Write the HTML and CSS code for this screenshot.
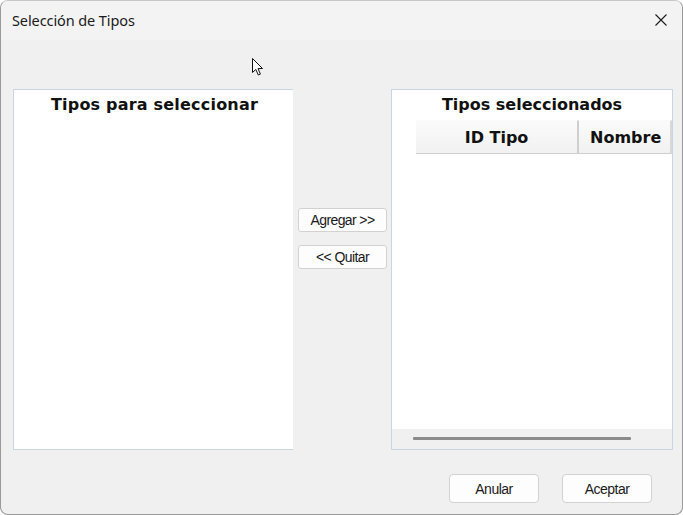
FILE: index.html
```html
<!DOCTYPE html>
<html lang="es">
<head>
<meta charset="utf-8">
<title>Selección de Tipos</title>
<link rel="stylesheet" href="styles.css">
</head>
<body>
<div class="window">
  <div class="titlebar">
    <span class="title">Selección de Tipos</span>
    <span class="close">
      <svg width="12" height="12" viewBox="0 0 12 12"><path d="M0.5 0.5 L11.5 11.5 M11.5 0.5 L0.5 11.5" stroke="#1b1b1b" stroke-width="1.1" fill="none"/></svg>
    </span>
  </div>
  <div class="content">
    <div class="panels">
      <div class="panel left">
        <div class="panel-title">Tipos para seleccionar</div>
      </div>
      <div class="middle">
        <button class="btn small">Agregar &gt;&gt;</button>
        <button class="btn small">&lt;&lt; Quitar</button>
      </div>
      <div class="panel right">
        <div class="panel-title">Tipos seleccionados</div>
        <div class="grid-header">
          <div class="col id">ID Tipo</div>
          <div class="col nombre">Nombre</div>
        </div>
        <div class="grid-body"></div>
        <div class="hscroll"><div class="thumb"></div></div>
      </div>
    </div>
    <div class="footer">
      <button class="btn big">Anular</button>
      <button class="btn big">Aceptar</button>
    </div>
  </div>
  <svg class="cursor" width="13" height="20" viewBox="0 0 13 20"><path d="M1.5 1.5 L1.5 15.5 L4.8 12.4 L7.3 18 L9.4 17.1 L7 11.6 L11.5 11.5 Z" fill="#fff" stroke="#111" stroke-width="1" stroke-linejoin="round"/></svg>
</div>
</body>
</html>
```
FILE: styles.css
```css
* { box-sizing: border-box; }
html, body { margin: 0; padding: 0; background: #ffffff; }
body { width: 683px; height: 515px; overflow: hidden; }

.window {
  position: relative;
  width: 683px;
  height: 515px;
  border: 1px solid #9a9a9a;
  border-top-color: #c8c8c8;
  border-radius: 8px;
  background: #f0f0f0;
  overflow: hidden;
  display: flex;
  flex-direction: column;
}

.titlebar {
  height: 39px;
  background: #f3f3f3;
  display: flex;
  align-items: center;
  justify-content: space-between;
  padding: 0 15px 0 11px;
  flex: none;
}
.title {
  font-family: "Noto Sans", "Open Sans", sans-serif;
  font-size: 14.5px;
  color: #1a1a1a;
  letter-spacing: -0.1px;
  margin-top: -1px;
}
.close { display: flex; margin-top: -1px; }

.content {
  flex: 1;
  display: flex;
  flex-direction: column;
  padding: 49px 9px 0 12px;
}

.panels {
  display: flex;
  height: 361px;
}

.panel {
  background: #ffffff;
  border: 1px solid #c9d5e3;
  display: flex;
  flex-direction: column;
}
.panel.left {
  width: 280px;
  border-right: none;
}
.panel.right {
  width: 282px;
}

.panel-title {
  font-family: "DejaVu Sans", Verdana, sans-serif;
  font-weight: bold;
  font-size: 16px;
  color: #111;
  text-align: center;
  line-height: 18px;
  padding-top: 6px;
  height: 30px;
}
.panel.left .panel-title { padding-left: 2px; letter-spacing: 0.2px; }

.middle {
  width: 98px;
  display: flex;
  flex-direction: column;
  align-items: center;
  padding-top: 119px;
  gap: 13px;
  padding-left: 1px;
}

.btn {
  font-family: "Liberation Sans", Arial, sans-serif;
  color: #1a1a1a;
  background: #fdfdfd;
  border: 1px solid #d2d2d2;
  border-radius: 3px;
  padding: 0;
  margin: 0;
}
.btn.small {
  width: 89px;
  height: 24px;
  font-size: 14px;
  letter-spacing: -0.6px;
}

.grid-header {
  display: flex;
  margin-left: 24px;
  height: 34px;
  flex: none;
}
.col {
  font-family: "DejaVu Sans", Verdana, sans-serif;
  font-weight: bold;
  font-size: 16px;
  color: #111;
  display: flex;
  align-items: center;
  background: linear-gradient(#fbfbfb, #f1f1f1);
  border-bottom: 1px solid #cfcfcf;
  border-top: 1px solid #fafafa;
  padding-top: 1px;
}
.col.id {
  width: 163px;
  justify-content: center;
  border-right: 2px solid #cfcfcf;
}
.col.nombre {
  flex: 1;
  padding-left: 11px;
  border-right: 2px solid #d8d8d8;
  white-space: nowrap;
  overflow: hidden;
}

.grid-body {
  flex: 1;
  background: #ffffff;
}

.hscroll {
  height: 20px;
  flex: none;
  background: #f0f0f0;
  padding: 8px 0 0 21px;
}
.thumb {
  width: 218px;
  height: 3px;
  background: #8a8a8a;
  border-radius: 1px;
}

.footer {
  display: flex;
  justify-content: flex-end;
  gap: 23px;
  padding-top: 24px;
  padding-right: 21px;
}
.btn.big {
  width: 90px;
  height: 29px;
  font-size: 14px;
  letter-spacing: -0.5px;
  border-radius: 4px;
}

.cursor {
  position: absolute;
  left: 250px;
  top: 56px;
}
```
